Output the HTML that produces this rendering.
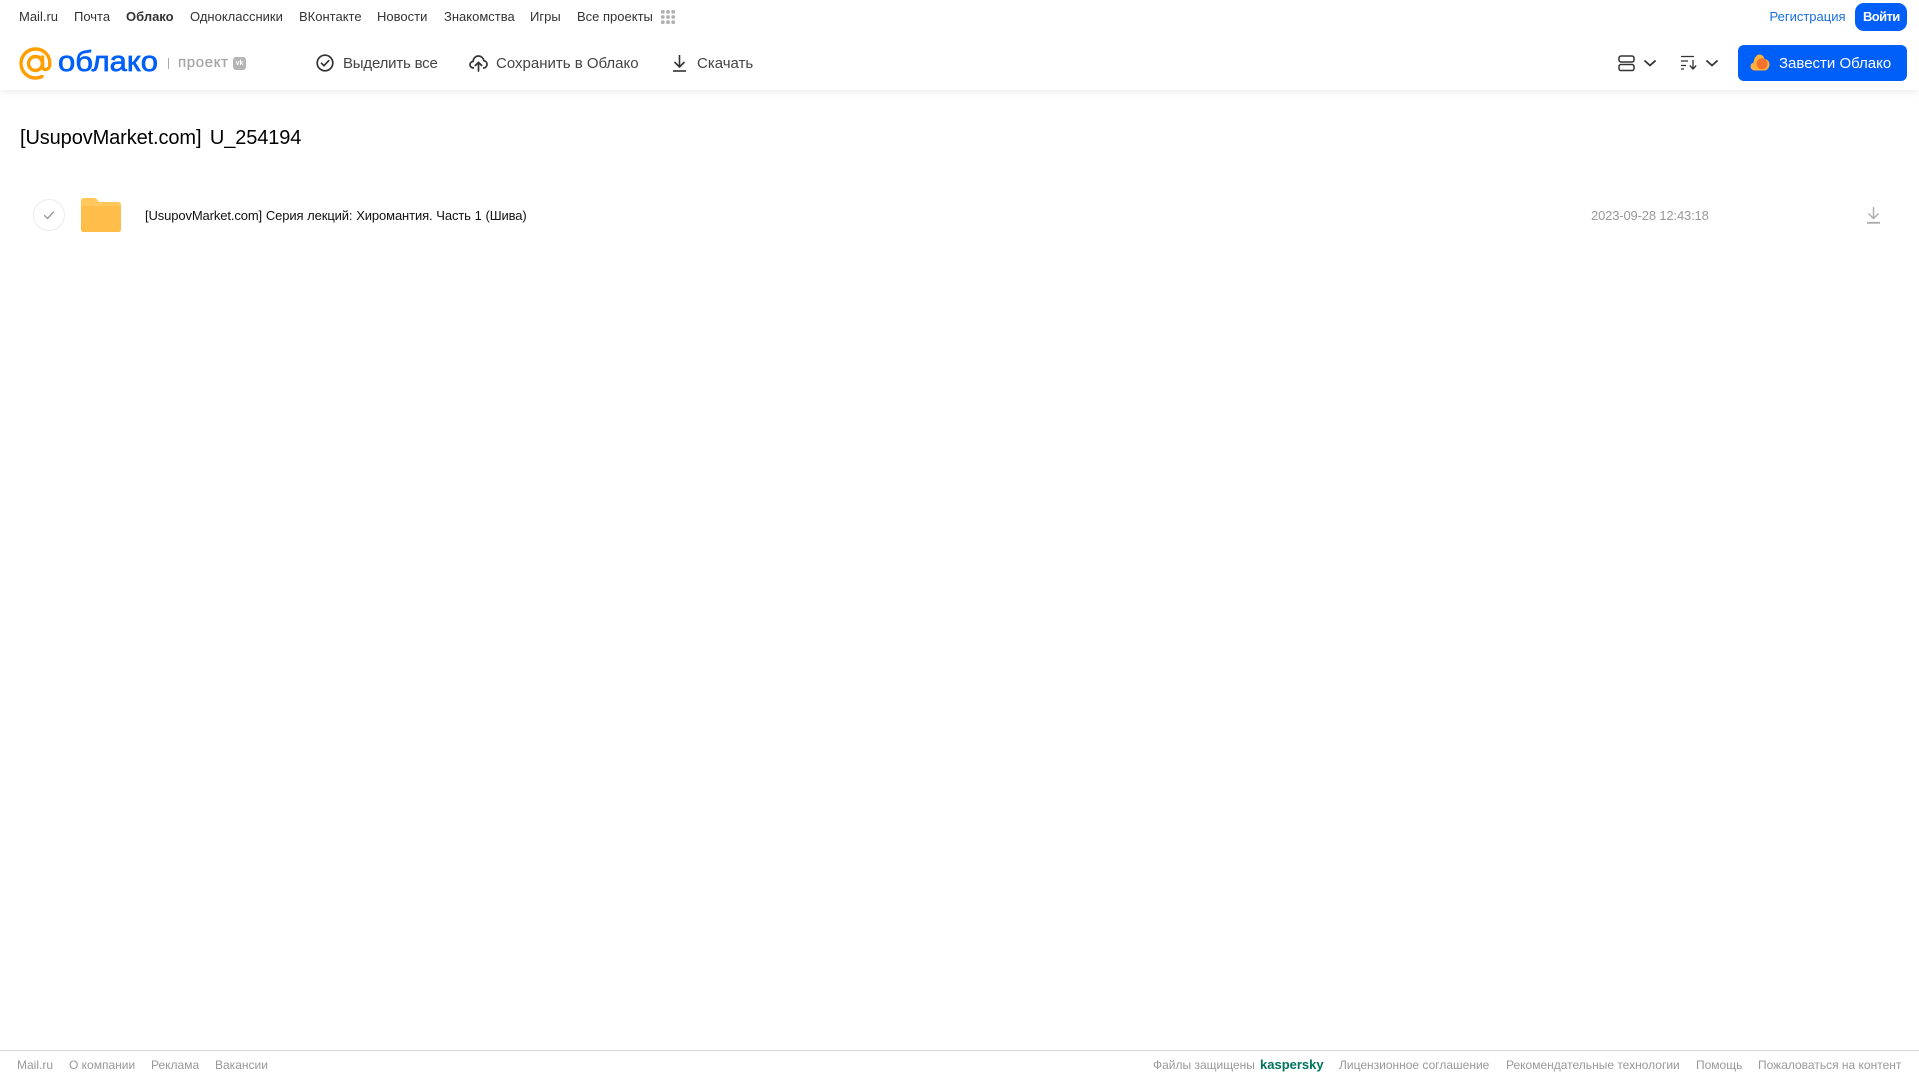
<!DOCTYPE html>
<html lang="ru">
<head>
<meta charset="utf-8">
<title>Облако</title>
<style>
html,body{margin:0;padding:0;background:#fff;width:1919px;height:1079px;overflow:hidden;font-family:"Liberation Sans",sans-serif}
.t{position:absolute;white-space:nowrap;line-height:20px}
.n{top:7px;font-size:13px;color:#333}
.b{top:54px;font-size:15px;color:#444}
.f{top:1055px;font-size:12px;color:#999}
svg{position:absolute;overflow:visible}
#hdr{position:absolute;left:0;top:0;width:1919px;height:90px;background:#fff;box-shadow:0 2px 8px rgba(0,0,0,.08)}
</style>
</head>
<body>
<div id="hdr"></div>

<span class="t n" style="left:19px">Mail.ru</span>
<span class="t n" style="left:74px">Почта</span>
<span class="t n" style="left:126px;font-weight:bold">Облако</span>
<span class="t n" style="left:190px">Одноклассники</span>
<span class="t n" style="left:299px">ВКонтакте</span>
<span class="t n" style="left:377px">Новости</span>
<span class="t n" style="left:444px">Знакомства</span>
<span class="t n" style="left:530px">Игры</span>
<span class="t n" style="left:577px">Все проекты</span>
<svg style="left:661px;top:10px" width="15" height="15" fill="#b0b0b0"><rect x="0" y="0" width="3.600" height="3.600" rx="1"/><rect x="5.200" y="0" width="3.600" height="3.600" rx="1"/><rect x="10.400" y="0" width="3.600" height="3.600" rx="1"/><rect x="0" y="5.200" width="3.600" height="3.600" rx="1"/><rect x="5.200" y="5.200" width="3.600" height="3.600" rx="1"/><rect x="10.400" y="5.200" width="3.600" height="3.600" rx="1"/><rect x="0" y="10.400" width="3.600" height="3.600" rx="1"/><rect x="5.200" y="10.400" width="3.600" height="3.600" rx="1"/><rect x="10.400" y="10.400" width="3.600" height="3.600" rx="1"/></svg>

<span class="t n" style="left:1769.500px;color:#1a6fe0">Регистрация</span>
<div style="position:absolute;left:1855px;top:3px;width:52px;height:28px;background:#005ff9;border-radius:9px"></div>
<span class="t n" style="left:1863px;color:#fff;font-weight:bold;letter-spacing:-.6px">Войти</span>

<svg style="left:19px;top:47px" width="33" height="33" viewBox="0 0 33 33" fill="none"><circle cx="16.500" cy="16.500" r="7" stroke="#ff9e00" stroke-width="3.400"/><path d="M23.500 10v9.500c0 4.500 6.800 4 7.300-1.500C31.500 8 24.500 2 16.500 2 8.500 2 2 8.500 2 16.500S8.500 31 16.500 31c2.500 0 4.500-.5 6.500-1.500" stroke="#ff9e00" stroke-width="3.400" stroke-linecap="round"/></svg>
<svg style="left:56px;top:44px" width="106" height="36"><text x="2" y="27" font-family="Liberation Sans" font-size="29" fill="#005ff9" stroke="#005ff9" stroke-width=".7" textLength="100" lengthAdjust="spacingAndGlyphs">облако</text></svg>
<div style="position:absolute;left:168px;top:58px;width:1px;height:11px;background:#aaa"></div>
<span class="t" style="left:178px;top:53px;font-size:15px;color:#a6a6a6;-webkit-text-stroke:.3px #a6a6a6;letter-spacing:.65px">проект</span>
<div style="position:absolute;left:233px;top:57px;width:13px;height:13px;background:#b5b5b5;border-radius:3px;color:#fff;font-size:7px;line-height:13px;text-align:center;font-weight:bold">vk</div>

<svg style="left:316px;top:54px" width="18" height="18" fill="none" stroke="#333" stroke-width="1.700"><circle cx="9" cy="9" r="7.800"/><path d="M5.500 9.300l2.500 2.400 4.700-5" stroke-linecap="round" stroke-linejoin="round"/></svg>
<span class="t b" style="left:343px;letter-spacing:-.2px">Выделить все</span>
<svg style="left:469px;top:54px" width="19" height="18" fill="none" stroke="#333" stroke-width="1.700"><path d="M5 14H4.500C2.500 14 1 12.500 1 10.700c0-1.700 1.200-3 3-3.200C4.500 4 6.700 2 9.500 2c2.700 0 4.900 2 5.400 4.700 1.900.3 3.100 1.900 3.100 3.700 0 2-1.500 3.600-3.500 3.600H14" stroke-linejoin="round"/><path d="M9.500 17V8.500M6.300 11.500l3.200-3.200 3.200 3.200" stroke-linecap="round" stroke-linejoin="round"/></svg>
<span class="t b" style="left:496px">Сохранить в Облако</span>
<svg style="left:671.500px;top:54px" width="15" height="18" fill="none" stroke="#333" stroke-width="1.600"><path d="M7.500 1v11.500M2.500 8l5 5 5-5"/><path d="M1 17h13"/></svg>
<span class="t b" style="left:697px">Скачать</span>

<svg style="left:1618px;top:55px" width="17" height="16" fill="none" stroke="#333" stroke-width="1.500"><rect x="1" y="1" width="15" height="6" rx="2"/><rect x="1" y="9.500" width="15" height="6" rx="2"/></svg>
<svg style="left:1644px;top:60px" width="12" height="7" fill="none" stroke="#333" stroke-width="1.800"><path d="M1 1l5 4.500L11 1" stroke-linecap="round" stroke-linejoin="round"/></svg>
<svg style="left:1681px;top:55px" width="17" height="15" fill="none" stroke="#333" stroke-width="1.300"><path d="M0 1.500h13M0 6h7M0 10.500h5M0 14h3"/><path d="M12 5v9M8.800 10.500l3.200 3.500 3.200-3.500"/></svg>
<svg style="left:1706px;top:60px" width="12" height="7" fill="none" stroke="#333" stroke-width="1.800"><path d="M1 1l5 4.500L11 1" stroke-linecap="round" stroke-linejoin="round"/></svg>

<div style="position:absolute;left:1738px;top:45px;width:169px;height:36px;background:#005ff9;border-radius:6px"></div>
<svg style="left:1750px;top:54px" width="20" height="17"><path d="M5 16.500C2 16.500.5 14.500.5 12.500c0-2 1.300-3.500 3-3.800C4 4 6.500.5 9.500.5c2.500 0 4.500 2 5 4.500 3 .3 5 2.500 5 5.500 0 3.300-2.500 6-5.500 6z" fill="#ffb13d"/><circle cx="12" cy="9.800" r="5.500" fill="#f4732a"/></svg>
<span class="t" style="left:1779px;top:54px;font-size:15px;color:#fff">Завести Облако</span>

<span class="t" style="left:20px;top:127px;font-size:20px;line-height:23px;color:#000;word-spacing:3px;letter-spacing:-.11px">[UsupovMarket.com] U_254194</span>

<div style="position:absolute;left:33px;top:199px;width:30px;height:30px;border:1px solid #ececec;border-radius:50%"></div>
<svg style="left:43px;top:210px" width="12" height="10" fill="none" stroke="#999" stroke-width="1.300"><path d="M1.500 5.500L4.500 8.500 10.500 2" stroke-linecap="round" stroke-linejoin="round"/></svg>
<svg style="left:81px;top:198px" width="40" height="34"><path d="M3 0h10c2 0 3 1 4 3l1 1h19c2 0 3 1 3 3v24c0 2-1 3-3 3H3c-2 0-3-1-3-3V3C0 1 1 0 3 0z" fill="#ffc75c"/><path d="M0 8h40v23c0 2-1 3-3 3H3c-2 0-3-1-3-3z" fill="#ffbe4a"/></svg>
<span class="t" style="left:145px;top:206px;font-size:13px;color:#111;letter-spacing:-.12px;word-spacing:.3px">[UsupovMarket.com] Серия лекций: Хиромантия. Часть 1 (Шива)</span>
<span class="t" style="left:1591px;top:206px;font-size:13px;color:#999;letter-spacing:-.16px">2023-09-28 12:43:18</span>
<svg style="left:1867px;top:207px" width="13" height="17" fill="none" stroke="#aaa" stroke-width="1.400"><path d="M6.500 0v11M1.500 6.500l5 5 5-5"/><path d="M0 15.800h13" stroke-width="1.800"/></svg>

<div style="position:absolute;left:0;top:1050px;width:1919px;height:1px;background:#d9d9d9"></div>
<span class="t f" style="left:17px">Mail.ru</span>
<span class="t f" style="left:69px">О компании</span>
<span class="t f" style="left:151px">Реклама</span>
<span class="t f" style="left:215px">Вакансии</span>
<span class="t f" style="left:1153px">Файлы защищены</span>
<span class="t f" style="left:1260px;font-size:13px;font-weight:bold;color:#00735a">kaspersky</span>
<span class="t f" style="left:1339px">Лицензионное соглашение</span>
<span class="t f" style="left:1506px">Рекомендательные технологии</span>
<span class="t f" style="left:1696px">Помощь</span>
<span class="t f" style="left:1758px">Пожаловаться на контент</span>
</body>
</html>
